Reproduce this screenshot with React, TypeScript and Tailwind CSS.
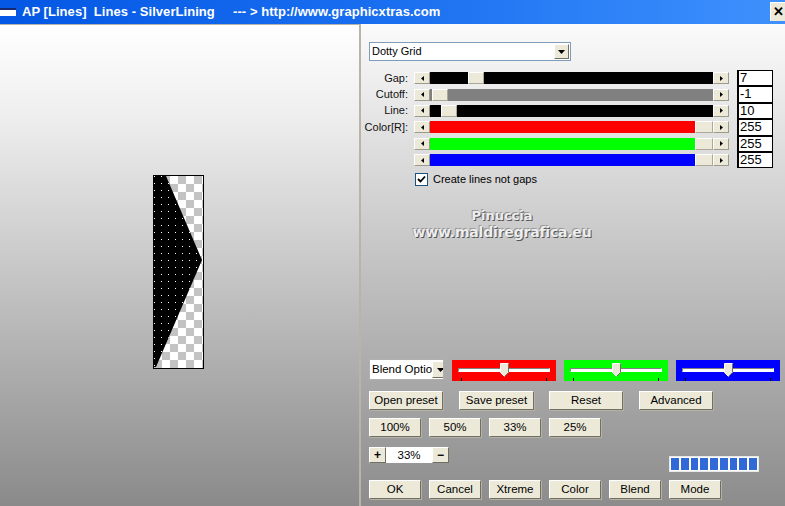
import React from 'react';

const ui = "font-['Liberation_Sans',Arial,sans-serif]";

const Arrow: React.FC<{ dir: 'l' | 'r' }> = ({ dir }) => (
  <div className="w-[16px] h-[12px] bg-[#ece9d8] border border-t-white border-l-white border-r-[#9d9a8c] border-b-[#9d9a8c] flex items-center justify-center shrink-0">
    <svg width="3" height="5" viewBox="0 0 3 5">
      {dir === 'l' ? <path d="M3 0 L0 2.5 L3 5 Z" fill="#000" /> : <path d="M0 0 L3 2.5 L0 5 Z" fill="#000" />}
    </svg>
  </div>
);

interface SliderProps {
  label: string;
  value: string;
  track: string;
  thumbLeft: number;
  thumbWidth: number;
}

const SliderRow: React.FC<SliderProps> = ({ label, value, track, thumbLeft, thumbWidth }) => (
  <div className="flex items-center h-[16.4px]">
    <div className="w-[39px] flex justify-end whitespace-nowrap text-[11px] text-[#111] leading-none">{label}</div>
    <div className="ml-[6px] flex items-center">
      <Arrow dir="l" />
      <div className={`relative w-[283px] h-[12px] ${track}`}>
        <div
          className="absolute top-0 h-[12px] bg-[#ece9d8] border border-t-white border-l-white border-r-[#aca899] border-b-[#aca899]"
          style={{ left: thumbLeft, width: thumbWidth }}
        />
      </div>
      <Arrow dir="r" />
    </div>
    <div className="ml-[8px] w-[36px] h-[16.4px] bg-white border border-black border-l-2 text-[13px] leading-[14px] pl-[1px] text-black">{value}</div>
  </div>
);

const Btn: React.FC<{ w: string; children: React.ReactNode }> = ({ w, children }) => (
  <div className={`${w} h-[19px] shrink-0 bg-[#ece9d8] border border-t-white border-l-white border-r-[#716f64] border-b-[#716f64] shadow-[1px_1px_0_#b5b2a5] flex items-center justify-center text-[11.5px] text-black`}>
    {children}
  </div>
);

const ColorSlider: React.FC<{ bg: string; thumb: number }> = ({ bg, thumb }) => (
  <div className={`relative w-[104px] h-[21px] shrink-0 ${bg}`}>
    <div className="absolute left-[6px] right-[6px] top-[8px] h-[4px] bg-white border border-t-[#808080] border-l-[#808080] border-b-white border-r-white" />
    <div className="absolute left-[9px] bottom-0 w-[1px] h-[3px] bg-black" />
    <div className="absolute right-[9px] bottom-0 w-[1px] h-[3px] bg-black" />
    <svg className="absolute top-[3px]" style={{ left: thumb }} width="9" height="14" viewBox="0 0 9 14">
      <path d="M0.5 0.5 H8.5 V9.5 L4.5 13.5 L0.5 9.5 Z" fill="#ece9d8" stroke="#fff" />
      <path d="M8.5 0.5 V9.5 L4.5 13.5" fill="none" stroke="#716f64" />
    </svg>
  </div>
);

const Preview: React.FC = () => (
  <div className="w-[51px] h-[194px] border border-black bg-white">
    <svg width="49" height="192" viewBox="0 0 49 192">
      <defs>
        <pattern id="chk" width="16" height="16" patternUnits="userSpaceOnUse">
          <rect width="16" height="16" fill="#fff" />
          <rect x="8" y="0" width="8" height="8" fill="#c3c3c3" />
          <rect x="0" y="8" width="8" height="8" fill="#c3c3c3" />
        </pattern>
        <pattern id="dots" x="7" y="14" width="7" height="7" patternUnits="userSpaceOnUse">
          <rect width="1" height="1" fill="#fff" />
        </pattern>
        <clipPath id="shape">
          <polygon points="0,0 12,0 48,84 2,191 0,191" />
        </clipPath>
      </defs>
      <rect width="49" height="192" fill="url(#chk)" />
      <polygon points="0,0 12,0 48,84 2,191 0,191" fill="#000" />
      <rect width="49" height="192" fill="url(#dots)" clipPath="url(#shape)" />
    </svg>
  </div>
);

export default function App() {
  return (
    <div className={`w-[785px] h-[506px] overflow-hidden flex flex-col ${ui}`}>
      {/* title bar */}
      <div className="h-[24px] shrink-0 flex items-center bg-[linear-gradient(90deg,#0357e4,#1a6ff0_50%,#3f91fd)] relative">
        <div className="w-[16px] h-[8px] bg-white border-t-2 border-[#1a2a6e]" />
        <div className="ml-[6px] text-white font-bold text-[13px] whitespace-pre tracking-[0.05px]">
          AP [Lines]  Lines - SilverLining     --- &gt; http://www.graphicxtras.com
        </div>
        <div className="absolute right-0 top-[2px] w-[15px] h-[19px] bg-[#ece9d8] border-l border-t border-white flex items-center justify-center text-[13px] font-bold text-black">
          ✕
        </div>
      </div>

      <div className="flex flex-1 min-h-0">
        {/* preview */}
        <div className="w-[361px] shrink-0 border-t border-r-2 border-[#b8b4a8] bg-[linear-gradient(180deg,#ffffff,#ededed_20%,#8a8a8a)] flex items-center justify-center pt-[12px] pr-[2px]">
          <Preview />
        </div>

        {/* controls */}
        <div className="relative flex-1 pl-[8px] bg-[linear-gradient(180deg,#fbfbfb,#c8c8c8_45%,#8c8c8c)] flex flex-col">
          <div className="mt-[18px] w-[202px] h-[19px] bg-white border border-[#7f9db9] flex items-center justify-between">
            <span className="pl-[2px] text-[11px] text-black">Dotty Grid</span>
            <div className="w-[15px] h-[15px] mr-[1px] bg-[#ece9d8] border border-t-white border-l-white border-r-[#716f64] border-b-[#716f64] flex items-center justify-center">
              <svg width="7" height="4" viewBox="0 0 7 4"><path d="M0 0 H7 L3.5 4 Z" fill="#000" /></svg>
            </div>
          </div>

          <div className="mt-[9px] flex flex-col">
            <SliderRow label="Gap:" value="7" track="bg-black" thumbLeft={38} thumbWidth={16} />
            <SliderRow label="Cutoff:" value="-1" track="bg-[#808080]" thumbLeft={2} thumbWidth={16} />
            <SliderRow label="Line:" value="10" track="bg-black" thumbLeft={11} thumbWidth={16} />
            <SliderRow label="Color[R]:" value="255" track="bg-[#ff0000]" thumbLeft={265} thumbWidth={18} />
            <SliderRow label="" value="255" track="bg-[#00ff00]" thumbLeft={265} thumbWidth={18} />
            <SliderRow label="" value="255" track="bg-[#0000ff]" thumbLeft={265} thumbWidth={18} />
          </div>

          <div className="mt-[4px] ml-[46px] flex items-center h-[14px]">
            <div className="w-[13px] h-[13px] bg-white border border-[#1c5180] flex items-center justify-center">
              <svg width="9" height="9" viewBox="0 0 9 9"><path d="M1 4 L3.5 6.5 L8 1.5" fill="none" stroke="#000" strokeWidth="1.8" /></svg>
            </div>
            <span className="ml-[5px] text-[11px] text-black">Create lines not gaps</span>
          </div>

          {/* watermark */}
          <div className="absolute left-[46px] top-[183px] w-[190px] flex flex-col items-center font-['DejaVu_Sans',sans-serif] font-bold text-[#eeeeee] leading-[17px] [text-shadow:1px_1px_0_#555,-1px_-1px_0_#999]">
            <span className="text-[13px]">Pinuccia</span>
            <span className="text-[14px] tracking-[-0.2px]">www.maldiregrafica.eu</span>
          </div>

          <div className="mt-[173px] flex items-start">
            <div className="w-[75px] h-[21px] bg-white border border-[#b0b0b0] flex items-center justify-between overflow-hidden">
              <span className="pl-[2px] text-[11.5px] text-black whitespace-nowrap">Blend Optio</span>
              <div className="w-[16px] h-[17px] shrink-0 mr-[1px] bg-[#ece9d8] border border-t-white border-l-white border-r-[#716f64] border-b-[#716f64] flex items-center justify-center">
                <svg width="7" height="4" viewBox="0 0 7 4"><path d="M0 0 H7 L3.5 4 Z" fill="#000" /></svg>
              </div>
            </div>
            <div className="ml-[8px] mt-[1px] flex gap-[8px]">
              <ColorSlider bg="bg-[#ff0000]" thumb={48} />
              <ColorSlider bg="bg-[#00ff00]" thumb={48} />
              <ColorSlider bg="bg-[#0000ff]" thumb={48} />
            </div>
          </div>

          <div className="mt-[10px] flex">
            <Btn w="w-[74px]">Open preset</Btn>
            <div className="ml-[16px]"><Btn w="w-[75px]">Save preset</Btn></div>
            <div className="ml-[15px]"><Btn w="w-[74px]">Reset</Btn></div>
            <div className="ml-[16px]"><Btn w="w-[74px]">Advanced</Btn></div>
          </div>

          <div className="mt-[8px] flex gap-[8px]">
            <Btn w="w-[52px]">100%</Btn>
            <Btn w="w-[52px]">50%</Btn>
            <Btn w="w-[52px]">33%</Btn>
            <Btn w="w-[52px]">25%</Btn>
          </div>

          <div className="mt-[10px] flex items-start">
            <div className="flex items-center">
              <div className="w-[17px] h-[16px] bg-[#ece9d8] border border-t-white border-l-white border-r-[#716f64] border-b-[#716f64] flex items-center justify-center text-[12px] font-bold text-black leading-none">+</div>
              <div className="w-[46px] h-[16px] bg-white flex items-center justify-center text-[11.5px] text-black">33%</div>
              <div className="w-[17px] h-[16px] bg-[#ece9d8] border border-t-white border-l-white border-r-[#716f64] border-b-[#716f64] flex items-center justify-center text-[12px] font-bold text-black leading-none">−</div>
            </div>
            <div className="ml-[220px] mt-[9px] w-[90px] h-[16px] bg-white border border-[#e8e8e8] p-[1px] flex gap-[2px]">
              {Array.from({ length: 9 }).map((_, i) => (
                <div key={i} className="w-[8px] h-full bg-[#3169d6]" />
              ))}
            </div>
          </div>

          <div className="mt-[8px] flex gap-[8px]">
            <Btn w="w-[52px]">OK</Btn>
            <Btn w="w-[52px]">Cancel</Btn>
            <Btn w="w-[52px]">Xtreme</Btn>
            <Btn w="w-[52px]">Color</Btn>
            <Btn w="w-[52px]">Blend</Btn>
            <Btn w="w-[52px]">Mode</Btn>
          </div>
        </div>
      </div>
    </div>
  );
}
